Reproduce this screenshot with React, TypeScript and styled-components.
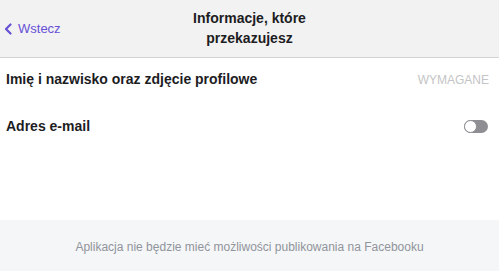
import React from "react";
import styled, { createGlobalStyle } from "styled-components";

const Global = createGlobalStyle`
  html, body { margin: 0; padding: 0; background: #fff; }
  body { font-family: "Liberation Sans", Arial, sans-serif; }
`;

const Page = styled.div`
  width: 499px;
  height: 271px;
  display: flex;
  flex-direction: column;
  background: #fff;
  overflow: hidden;
`;

const Header = styled.div`
  height: 58px;
  flex-shrink: 0;
  box-sizing: border-box;
  background: #f2f2f2;
  border-bottom: 1px solid #d2d2d2;
  display: grid;
  grid-template-columns: 1fr auto 1fr;
  align-items: center;
  padding: 0 4px;
`;

const Back = styled.div`
  display: flex;
  align-items: center;
  gap: 6px;
  color: #6750d6;
  font-size: 13px;
  padding-top: 0;
`;

const Title = styled.div`
  text-align: center;
  font-weight: bold;
  font-size: 14px;
  line-height: 20px;
  color: #1d1d1f;
  padding-bottom: 2px;
`;

const Body = styled.div`
  flex: 1;
  display: flex;
  flex-direction: column;
  padding: 13px 10px 0 6px;
`;

const Row = styled.div<{ $h: number }>`
  height: ${(p) => p.$h}px;
  display: flex;
  justify-content: space-between;
  align-items: flex-start;
`;

const Label = styled.div`
  font-weight: bold;
  font-size: 14px;
  color: #1d1d1f;
`;

const Required = styled.div`
  font-size: 12px;
  color: #c4c4c6;
  padding-top: 2px;
`;

const Toggle = styled.div`
  width: 24px;
  height: 13px;
  border-radius: 7px;
  background: #8e8e93;
  position: relative;
  margin-top: 2px;
  margin-right: 1px;
`;

const Knob = styled.div`
  position: absolute;
  left: 0;
  top: 0;
  width: 13px;
  height: 13px;
  box-sizing: border-box;
  border-radius: 50%;
  background: #fff;
  border: 1.5px solid #8e8e93;
`;

const Footer = styled.div`
  height: 51px;
  flex-shrink: 0;
  box-sizing: border-box;
  background: #f5f6f7;
  display: flex;
  align-items: center;
  justify-content: center;
  font-size: 12px;
  color: #90949c;
  padding-top: 3px;
`;

export default function App() {
  return (
    <>
      <Global />
      <Page>
        <Header>
          <Back>
            <svg width="8" height="12" viewBox="0 0 8 12">
              <path d="M6.5 1.5 L2 6 L6.5 10.5" fill="none" stroke="#6750d6" strokeWidth="2.2" strokeLinecap="round" strokeLinejoin="round" />
            </svg>
            Wstecz
          </Back>
          <Title>
            Informacje, które
            <br />
            przekazujesz
          </Title>
          <div />
        </Header>
        <Body>
          <Row $h={47}>
            <Label>Imię i nazwisko oraz zdjęcie profilowe</Label>
            <Required>WYMAGANE</Required>
          </Row>
          <Row $h={40}>
            <Label>Adres e-mail</Label>
            <Toggle>
              <Knob />
            </Toggle>
          </Row>
        </Body>
        <Footer>Aplikacja nie będzie mieć możliwości publikowania na Facebooku</Footer>
      </Page>
    </>
  );
}
